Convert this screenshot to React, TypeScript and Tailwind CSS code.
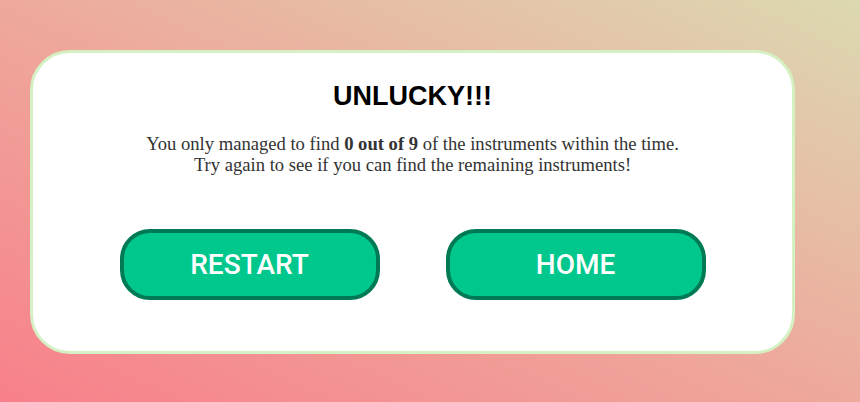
import React from "react";

export default function App() {
  return (
    <div className="w-[860px] h-[402px] overflow-hidden bg-[linear-gradient(to_top_right,#f8808a_0%,#eea99c_50%,#dcd9b2_100%)] pt-[50px] pl-[30px]">
      <div className="w-[765px] h-[304px] rounded-[40px] border-[3px] border-[#d5f0c2] bg-white flex flex-col items-center pt-[26px]">
        <h1 className="text-[27px] leading-[34px] font-bold text-black tracking-[0px] font-['Liberation_Sans',Arial,sans-serif]">
          UNLUCKY!!!
        </h1>
        <p className="mt-[20px] text-center text-[18.6px] leading-[21px] text-[#333] font-['Liberation_Serif','Times_New_Roman',serif]">
          You only managed to find <b>0 out of 9</b> of the instruments within the time.
          <br />
          Try again to see if you can find the remaining instruments!
        </p>
        <div className="mt-[54px] flex gap-[66px]">
          <button className="w-[260px] h-[71px] rounded-[30px] border-[4px] border-[#007a55] bg-[#00c78c] text-white text-[28px] font-medium font-['Roboto',sans-serif] flex items-center justify-center">
            RESTART
          </button>
          <button className="w-[260px] h-[71px] rounded-[30px] border-[4px] border-[#007a55] bg-[#00c78c] text-white text-[28px] font-medium font-['Roboto',sans-serif] flex items-center justify-center">
            HOME
          </button>
        </div>
      </div>
    </div>
  );
}
